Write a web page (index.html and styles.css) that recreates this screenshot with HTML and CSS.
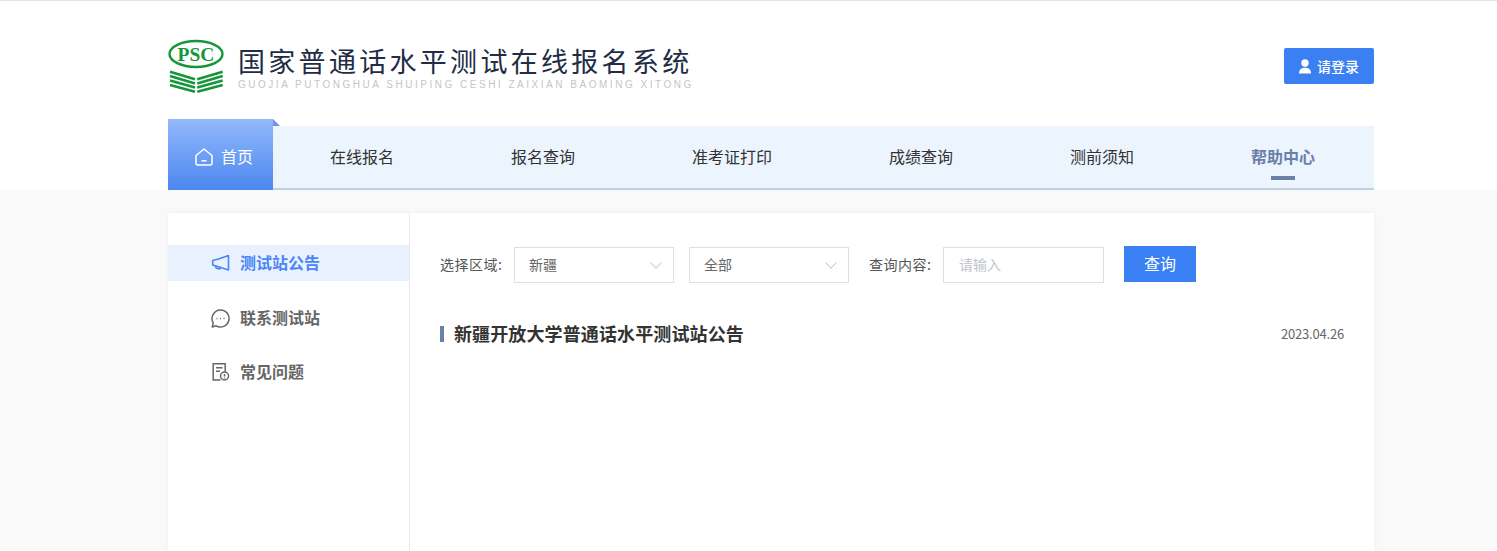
FILE: index.html
```html
<!DOCTYPE html>
<html lang="zh-CN">
<head>
<meta charset="utf-8">
<title>国家普通话水平测试在线报名系统</title>
<link rel="stylesheet" href="styles.css">
</head>
<body>
<header class="top">
  <div class="wrap brand-row">
    <div class="brand">
      <svg class="logo" width="56" height="56" viewBox="0 0 56 56">
        <ellipse cx="28" cy="15" rx="26.5" ry="13" fill="none" stroke="#15963a" stroke-width="2.4"/>
        <text x="28" y="22" text-anchor="middle" class="logo-text">PSC</text>
        <g fill="none" stroke="#15963a" stroke-width="2.6">
          <path d="M2 32.700 27 40.300M54.700 32.700 29.300 40.300"/>
          <path d="M2 37.100 27 44.500M54.700 37.100 29.300 44.500"/>
          <path d="M2 41.500 27 48.600M54.700 41.500 29.300 48.600"/>
          <path d="M2 46 27 52.700M54.700 46 29.300 52.700"/>
        </g>
      </svg>
      <div class="brand-text">
        <div class="brand-cn">国家普通话水平测试在线报名系统</div>
        <div class="brand-en">GUOJIA PUTONGHUA SHUIPING CESHI ZAIXIAN BAOMING XITONG</div>
      </div>
    </div>
    <a class="login">
      <svg width="12" height="15" viewBox="0 0 12 15"><circle cx="6" cy="4" r="3.700" fill="#fff"/><path d="M0 14.500C0 10.500 2.500 8.800 6 8.800s6 1.700 6 5.700z" fill="#fff"/></svg>
      <span>请登录</span>
    </a>
  </div>
  <nav class="wrap nav">
    <a class="nav-home">
      <svg width="18" height="18" viewBox="0 0 18 18" fill="none" stroke="#fff" stroke-width="1.500"><path d="M1 7.500 9 1l8 6.500V15a2 2 0 0 1-2 2H3a2 2 0 0 1-2-2z" stroke-linejoin="round"/><path d="M6.500 12.800h5"/></svg>
      <span>首页</span>
    </a>
    <div class="nav-items">
      <a class="nav-item">在线报名</a>
      <a class="nav-item">报名查询</a>
      <a class="nav-item">准考证打印</a>
      <a class="nav-item">成绩查询</a>
      <a class="nav-item">测前须知</a>
      <a class="nav-item is-current">帮助中心</a>
    </div>
  </nav>
</header>
<main class="page">
  <div class="wrap card">
    <aside class="side">
      <a class="side-item is-active">
        <svg width="18" height="18" viewBox="0 0 18 18" fill="none" stroke="currentColor" stroke-width="1.600" stroke-linejoin="round"><path d="M17 1.500v14.500L7 12.800 1.200 11V6.500L7 5z"/><path d="M3.800 11.800 5 14.300l3.400.6.300-1.800"/></svg>
        <span>测试站公告</span>
      </a>
      <a class="side-item">
        <svg width="19" height="19" viewBox="0 0 19 19" fill="none" stroke="currentColor" stroke-width="1.500"><path d="M9.500 1a8.500 8.500 0 1 1-4.300 15.800L1.300 18l.9-4.200A8.500 8.500 0 0 1 9.500 1z" stroke-linejoin="round"/><path d="M5.500 9.500h1M9 9.500h1M12.500 9.500h1" stroke-width="1.600"/></svg>
        <span>联系测试站</span>
      </a>
      <a class="side-item">
        <svg width="18" height="18" viewBox="0 0 18 18" fill="none" stroke="currentColor" stroke-width="1.500"><path d="M9 17H1.700V.8h12v8"/><path d="M4.500 4.800h6.500M4.500 8.300h4"/><circle cx="13" cy="13" r="4"/><path d="M13 11v2.500M13 14.500v1"/></svg>
        <span>常见问题</span>
      </a>
    </aside>
    <section class="content">
      <form class="filter">
        <label class="filter-label">选择区域:</label>
        <div class="select select-first"><span>新疆</span><i class="chev"></i></div>
        <div class="select"><span>全部</span><i class="chev"></i></div>
        <label class="filter-label label-query">查询内容:</label>
        <div class="input">请输入</div>
        <button class="search" type="button">查询</button>
      </form>
      <article class="notice">
        <h3 class="notice-title"><span>新疆开放大学普通话水平测试站公告</span></h3>
        <time class="notice-date">2023.04.26</time>
      </article>
    </section>
  </div>
</main>
</body>
</html>
```
FILE: styles.css
```css
* { box-sizing: border-box; }
html, body { margin: 0; padding: 0; height: 551px; overflow: hidden; }
body {
  font-family: "Noto Sans CJK SC", "Liberation Sans", sans-serif;
  background: #f9f9f9;
  color: #333;
}
a { color: inherit; text-decoration: none; }
.wrap { width: 1206px; margin-left: 168px; }

.top { background: #fff; border-top: 1px solid #e2e2e2; height: 190px; }
.brand-row { height: 118px; display: flex; justify-content: space-between; align-items: flex-start; padding-top: 47px; }
.brand { display: flex; align-items: flex-start; margin-top: -9px; }
.logo { flex: none; }
.logo-text { font-family: "Liberation Serif", serif; font-weight: 700; font-size: 19.500px; fill: #15963a; }
.brand-text { margin-left: 14px; padding-top: 4px; }
.brand-cn { font-size: 27px; line-height: 36px; letter-spacing: 3.300px; color: #222c45; font-weight: 400; white-space: nowrap; }
.brand-en { font-family: "Liberation Sans", sans-serif; font-size: 10px; line-height: 12px; letter-spacing: 2.520px; color: #c3c5cc; white-space: nowrap; }
.login { width: 90px; height: 36px; background: #3a80f2; border-radius: 2px; color: #fff; font-size: 14px; font-weight: 500; display: flex; align-items: center; justify-content: center; gap: 6px; }

.nav { display: flex; height: 71px; align-items: flex-end; }
.nav-home { position: relative; width: 105px; height: 71px; flex: none; background: linear-gradient(#93b8fb, #4b87f0); color: #fff; font-size: 16px; line-height: 22px; display: flex; align-items: center; justify-content: center; gap: 8px; padding: 5px 0 0 7px; }
.nav-home span { margin-top: -2px; }
.nav-home::after { content: ""; position: absolute; left: 100%; top: 0; border-style: solid; border-width: 7px 0 0 7px; border-color: transparent transparent transparent #6e95dc; }
.nav-items { flex: 1; min-width: 0; height: 64px; display: flex; background: #ecf4fe; border-bottom: 2px solid #c2d0e4; }
.nav-item { flex: none; padding: 0 58.500px; display: flex; align-items: center; justify-content: center; font-size: 16px; color: #333; position: relative; height: 60px; white-space: nowrap; }
.nav-item:first-child { margin-left: -1.500px; }
.is-current { color: #6b80a8; font-weight: 700; }
.is-current::after { content: ""; position: absolute; left: 50%; bottom: 6px; width: 24px; height: 4px; margin-left: -12px; background: #6b80a8; }

.page { padding-top: 23px; }
.card { display: flex; height: 338px; background: #fff; box-shadow: 0 0 6px rgba(0, 0, 0, .04); }
.side { width: 242px; flex: none; border-right: 1px solid #e8e8ee; padding-top: 32px; display: flex; flex-direction: column; gap: 18px; }
.side-item { height: 36px; display: flex; align-items: center; padding-left: 43px; gap: 10px; font-size: 16px; font-weight: 700; color: #666; }
.side-item span { margin-top: -2px; }
.side-item svg { width: 19px; flex: none; }
.side-item.is-active { background: #e8f1fd; color: #4a86f7; margin-bottom: 1px; }

.content { flex: 1; padding: 33px 30px 0; min-width: 0; }
.filter { display: flex; align-items: center; height: 36px; }
.filter-label { font-size: 14px; letter-spacing: .5px; color: #555; white-space: nowrap; width: 74px; margin-top: -1px; }
.label-query { margin-left: 20px; }
.select { width: 160px; height: 36px; border: 1px solid #dcdfe6; display: flex; align-items: center; justify-content: space-between; padding: 0 14px 2px; font-size: 14px; color: #666; margin-top: 2px; }
.select-first { margin-right: 15px; }
.chev { width: 8px; height: 8px; border-right: 1px solid #c8ccd4; border-bottom: 1px solid #c8ccd4; transform: rotate(45deg); margin-top: -2px; margin-right: -1px; }
.input { width: 161px; height: 36px; border: 1px solid #dcdfe6; padding: 0 15px 2px; display: flex; align-items: center; font-size: 14px; color: #bfc4cc; margin-top: 2px; }
.search { width: 72px; height: 36px; margin-left: 20px; border: 0; padding: 0 0 2px; background: #3a80f2; color: #fff; font: 400 16px "Noto Sans CJK SC", sans-serif; }
.notice { display: flex; justify-content: space-between; align-items: center; margin-top: 39px; height: 26px; }
.notice-title { margin: 0; font-size: 18px; font-weight: 700; letter-spacing: .12px; color: #333; border-left: 4px solid #6b80a8; padding-left: 10px; line-height: 16px; }
.notice-title span { position: relative; top: -1px; }
.notice-date { font-size: 13px; color: #666; letter-spacing: -.2px; margin-top: -1px; }
```
